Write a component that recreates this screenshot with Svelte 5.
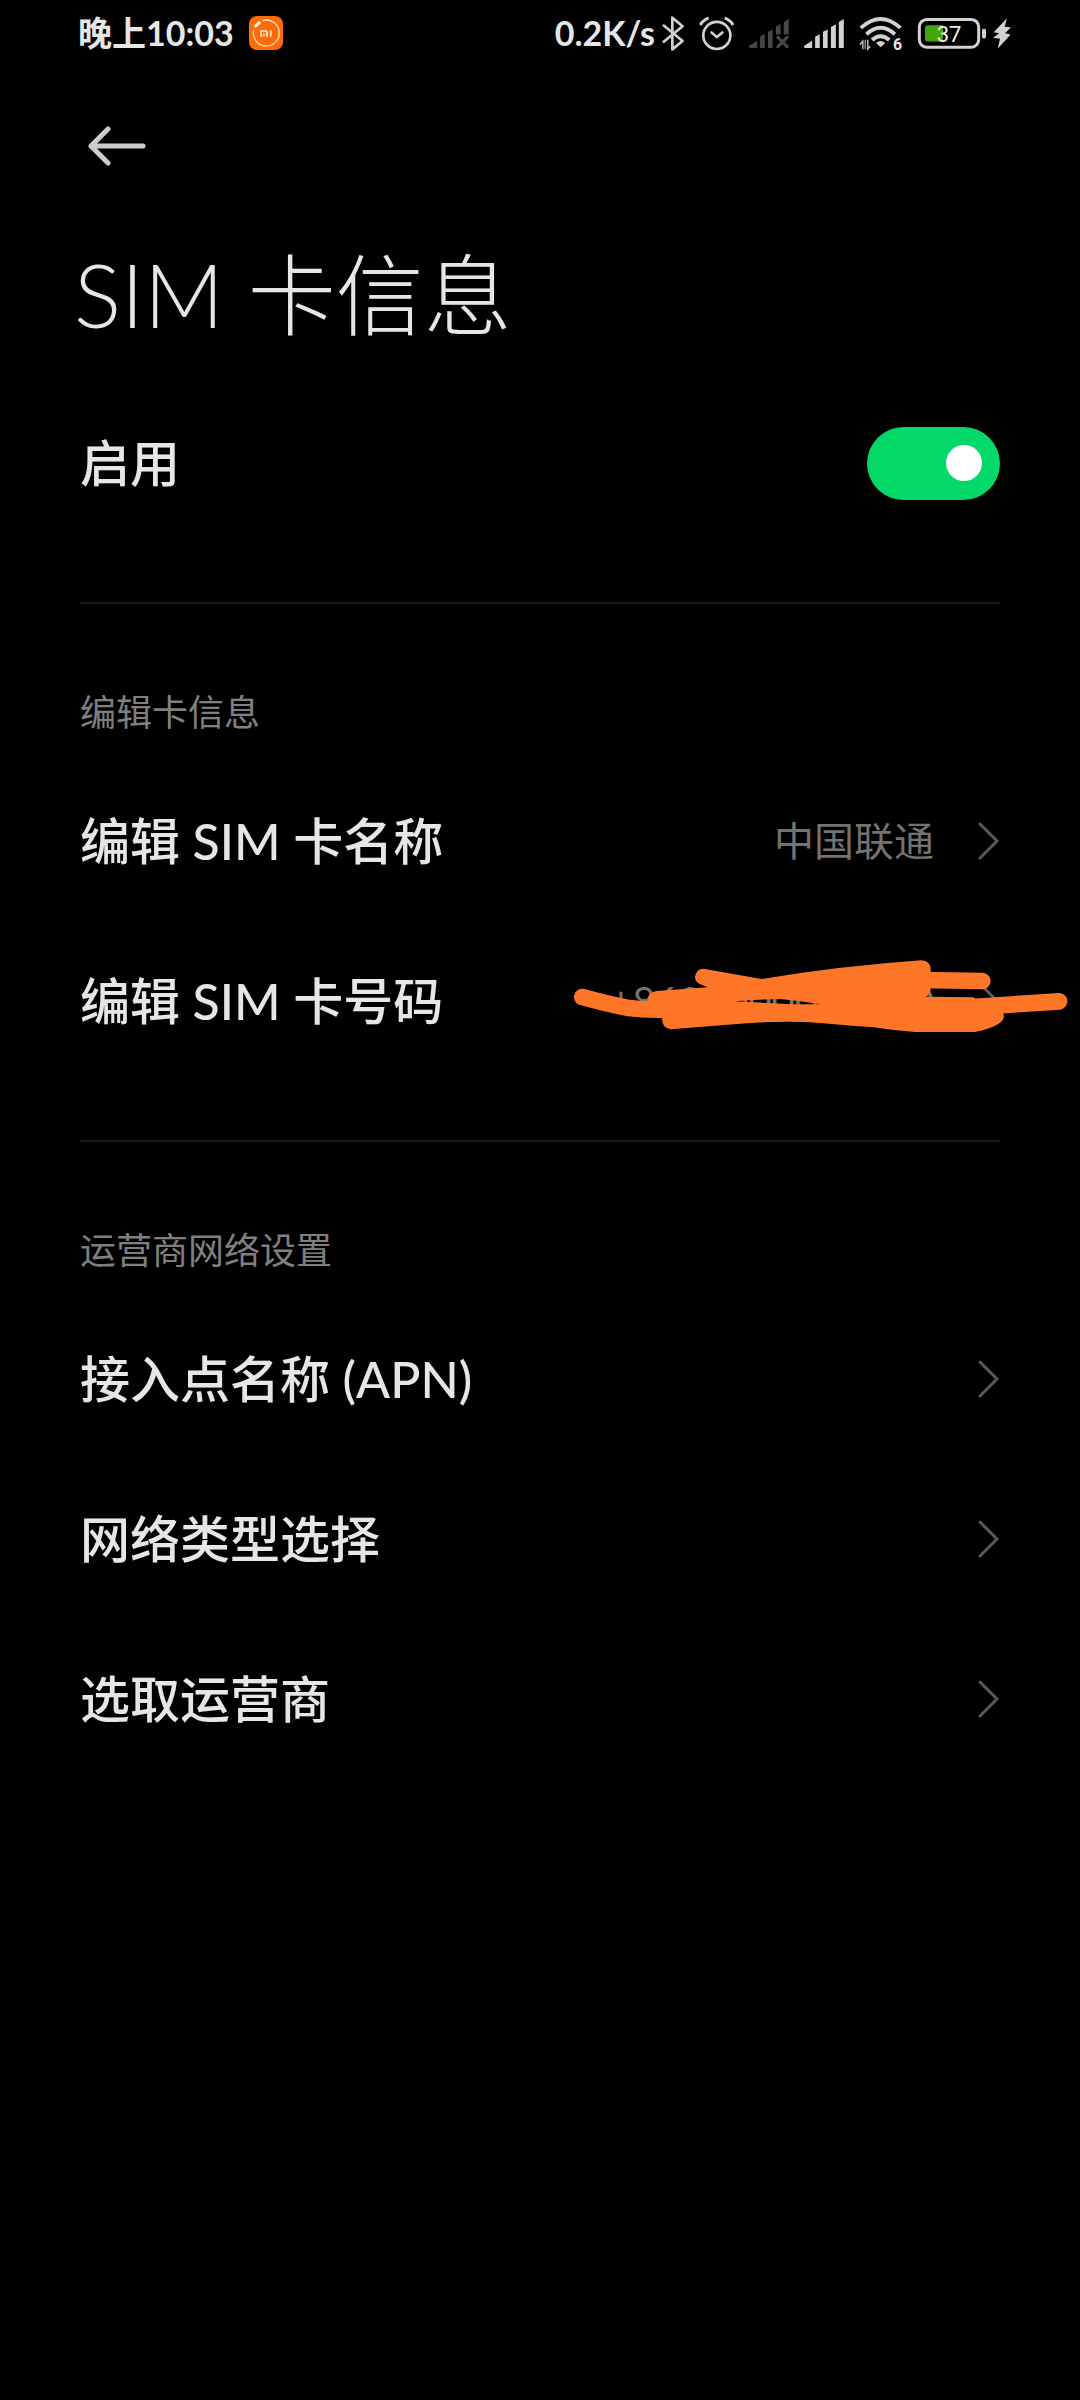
<script lang="ts">
  type Item = { label: string; value?: string; redacted?: boolean };
  type Group = { title: string; items: Item[] };

  let enabled = $state(true);

  const groups: Group[] = [
    {
      title: "编辑卡信息",
      items: [
        { label: "编辑 SIM 卡名称", value: "中国联通" },
        { label: "编辑 SIM 卡号码", value: "+8600000000000", redacted: true },
      ],
    },
    {
      title: "运营商网络设置",
      items: [
        { label: "接入点名称 (APN)" },
        { label: "网络类型选择" },
        { label: "选取运营商" },
      ],
    },
  ];
</script>

<div class="screen">
  <!-- ── Status bar ── -->
  <header class="status">
    <div class="status-left">
      <span>晚上10:03</span>
      <svg class="mi" viewBox="0 0 102 102" aria-hidden="true">
        <rect width="102" height="102" rx="24" fill="#ff6a0a" />
        <path d="M40 14A39 39 0 1 1 14 42" fill="none" stroke="#ffe3b8" stroke-width="4" />
        <path d="M20 30L31 20" stroke="#fff3dc" stroke-width="9" stroke-linecap="round" />
        <path d="M36 62V45H50Q54 45 54 49V62M45 52V62M65 43V62" fill="none" stroke="#ffe9cc" stroke-width="5" />
      </svg>
    </div>
    <div class="status-right">
      <div class="pair">
        <span>0.2K/s</span>
        <svg class="bt" viewBox="368 46 66 106" aria-hidden="true">
          <path d="M373 75L430 122L399 147V51L430 77L373 124" fill="none" stroke="#d2d2d2" stroke-width="8" stroke-linejoin="round" stroke-linecap="round" />
        </svg>
      </div>
      <svg class="alarm" viewBox="480 46 106 106" aria-hidden="true">
        <g fill="none" stroke="#d2d2d2" stroke-width="8">
          <circle cx="534" cy="105" r="41" />
          <path d="M518 96L534 110L551 96" stroke-linecap="round" />
          <path d="M484 73Q492 59 509 52M558 52Q575 59 583 73" stroke-width="9" />
        </g>
      </svg>
      <svg class="signal" viewBox="627 53 120 88" aria-hidden="true">
        <path fill="#474747" d="M627 141V134L651 119V141ZM660 141V106L674 98V141ZM684 141V92L698 85V141ZM708 100V76L722 68V100ZM732 100V62L747 53V100Z" />
        <path d="M714 109L742 137M742 109L714 137" stroke="#474747" stroke-width="10" stroke-linecap="round" />
      </svg>
      <svg class="signal" viewBox="69 53 120 88" aria-hidden="true">
        <path fill="#d2d2d2" d="M69 141V134L93 119V141ZM102 141V107L116 99V141ZM126 141V92L140 85V141ZM150 141V77L165 69V141ZM174 141V62L189 53V141Z" />
      </svg>
      <svg class="wifi" viewBox="235 50 132 106" aria-hidden="true">
        <g fill="none" stroke="#d2d2d2" stroke-width="12">
          <path d="M240 86Q300 32 360 86" />
          <path d="M257 105Q300 66 343 105" />
          <path d="M274 123Q300 100 326 123" />
        </g>
        <path fill="#d2d2d2" d="M286 132Q300 119 314 132L300 145Z" />
        <path d="M246 151V126L237 137M261 122V150L268 141" fill="none" stroke="#d2d2d2" stroke-width="4" />
        <path d="M253 122V150" stroke="#d2d2d2" stroke-width="3" />
        <text x="337" y="153" font-size="48" font-weight="700" fill="#e6e6e6">6</text>
      </svg>
      <div class="pair">
        <svg class="battery" viewBox="411 53 204 92" aria-hidden="true">
          <rect x="415" y="57" width="178" height="83" rx="22" fill="none" stroke="#d2d2d2" stroke-width="9" />
          <path d="M440 74H486V123H440Q432 123 432 115V82Q432 74 440 74Z" fill="#44a50f" />
          <rect x="603" y="85" width="12" height="29" rx="5" fill="#d2d2d2" />
          <text x="467" y="125" font-size="66" font-weight="400" fill="#f0f0f0">37</text>
        </svg>
        <svg class="bolt" viewBox="639 53 54 92" aria-hidden="true">
          <path fill="#d2d2d2" d="M681 53L641 95L658 98L639 112L660 115L653 145L692 102L675 98L693 80L674 79Z" />
        </svg>
      </div>
    </div>
  </header>

  <nav class="nav">
    <button class="back" aria-label="返回">
      <svg viewBox="0 0 58 40" fill="none" stroke="#cccccc" stroke-width="5" stroke-linecap="round" stroke-linejoin="round">
        <path d="M55 20H3M20 3L3 20L20 37" />
      </svg>
    </button>
  </nav>

  <main>
    <h1>SIM 卡信息</h1>

    <label class="row">
      <span class="label">启用</span>
      <input class="switch" type="checkbox" role="switch" bind:checked={enabled} />
    </label>

    {#each groups as group (group.title)}
      <section>
        <h2>{group.title}</h2>
        {#each group.items as item (item.label)}
          <button class="row">
            <span class="label">{item.label}</span>
            {#if item.value}
              <span class="value">{item.value}</span>
            {/if}
            <svg class="chevron" viewBox="0 0 22 38" aria-hidden="true">
              <path d="M2 2L19 19L2 36" />
            </svg>
            {#if item.redacted}
              <svg class="scribble" viewBox="0 0 1560 330" aria-hidden="true">
                <path
                  fill-rule="evenodd"
                  d="M430 89L605 120Q850 80 1085 64Q1112 66 1112 92V152Q1108 168 1098 173L1240 175L1247 179L1320 180L1332 232Q1330 262 1245 279H1065Q1000 274 935 264L895 262Q800 253 735 249Q640 246 560 253L332 271Q306 268 306 237L262 185Q264 160 290 156L443 145L428 139Q404 132 405 112Q410 90 430 89ZM523 187Q600 191 700 196L782 196Q720 185 660 180Q590 181 523 187Z"
                />
                <g fill="none" stroke-width="50" stroke-linecap="round">
                  <path d="M67 174Q140 194 200 206Q250 213 310 212" />
                  <path d="M1085 123L1267 126" />
                  <path d="M1240 204L1497 187" />
                </g>
              </svg>
            {/if}
          </button>
        {/each}
      </section>
    {/each}
  </main>
</div>

<style>
  :global(body) { background: #000; }

  .screen {
    min-height: 100vh; background: #000; color: #e6e6e6;
    font-family: Lato, "Noto Sans CJK SC", sans-serif;
  }

  /* ── Status bar ── */
  .status {
    height: 66px; padding: 0 69px 0 78px;
    display: flex; align-items: center; justify-content: space-between;
    font-size: 34px; font-weight: 700; line-height: 40px;
  }
  .status-left { display: flex; align-items: center; gap: 15px; }
  .status-right { display: flex; align-items: center; gap: 15px; }
  .pair { display: flex; align-items: center; gap: 7px; }
  .status svg { display: block; flex: none; overflow: visible; }
  .status text { font-family: Roboto, sans-serif; }
  .mi { width: 34px; height: 34px; }
  .bt { width: 22px; height: 35px; }
  .alarm { width: 35px; height: 35px; }
  .signal { width: 40px; height: 29px; }
  .wifi { width: 44px; height: 35px; }
  .battery { width: 68px; height: 31px; }
  .bolt { width: 18px; height: 31px; }

  .nav { height: 160px; padding: 0 80px; display: flex; align-items: center; }
  .back { background: none; border: none; padding: 8px; cursor: pointer; }
  .back svg { display: block; width: 58px; height: 40px; }

  h1 {
    margin: 0 0 21px; padding: 0 74px;
    font-size: 88px; font-weight: 300; line-height: 136px;
  }

  /* ── Rows ── */
  .row {
    position: relative; box-sizing: border-box; width: 100%; height: 160px;
    padding: 0 80px; border: none; background: none;
    display: flex; align-items: center;
    font: inherit; color: inherit; text-align: left; cursor: pointer;
  }
  .label { flex: 1; font-size: 50px; font-weight: 500; line-height: 72px; }
  .value { margin-right: 44px; font-size: 40px; line-height: 60px; color: #737373; }
  .chevron {
    width: 22px; height: 38px; flex: none;
    fill: none; stroke: #595959; stroke-width: 3; stroke-linecap: round;
  }
  .scribble {
    position: absolute; right: 0; top: 18px; width: 520px; height: 110px;
    fill: #ff7629; stroke: #ff7629; stroke-width: 0;
  }

  .switch {
    appearance: none; margin: 0; width: 133px; height: 73px; flex: none;
    box-sizing: border-box; padding: 0 18px; border-radius: 37px;
    background: #333; display: flex; align-items: center; cursor: pointer;
  }
  .switch::before {
    content: ""; width: 36px; height: 36px; border-radius: 50%; background: #fff;
  }
  .switch:checked { background: #02d968; justify-content: flex-end; }

  /* ── Groups ── */
  section { margin-top: 59px; }
  section::before {
    content: ""; display: block; height: 2px; margin: 0 80px; background: #1a1a1a;
  }
  h2 {
    margin: 0; padding: 81px 80px 22px;
    font-size: 36px; font-weight: 400; line-height: 54px; color: #808080;
  }
</style>
